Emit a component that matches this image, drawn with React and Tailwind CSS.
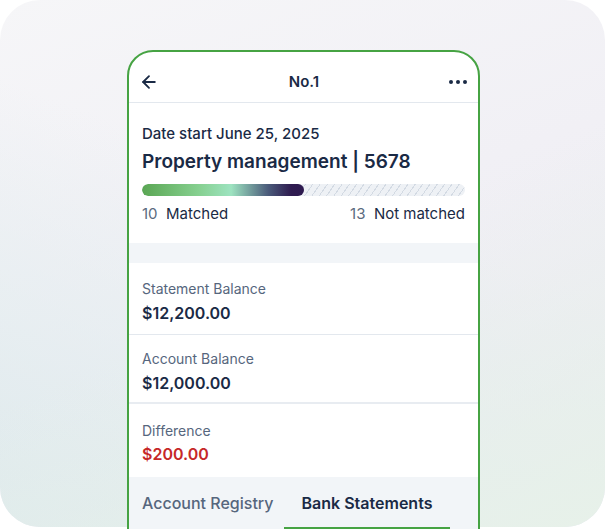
import { ArrowLeft } from 'lucide-react';

const ROWS = [
  { label: 'Statement Balance', value: '$12,200.00', cls: 'pt-[16px] pb-[10px] border-b border-[#e3e8ee]', gap: 'mt-[3px]' },
  { label: 'Account Balance', value: '$12,000.00', cls: 'pt-[14px] pb-[8px] border-b-2 border-[#e8ecf1]', gap: 'mt-[3px]' },
  { label: 'Difference', value: '$200.00', red: true, cls: 'pt-[17px] pb-[12px]', gap: 'mt-[2px]' },
];

export default function App() {
  return (
    <div
      className="relative w-[607px] h-[529px] overflow-hidden bg-white"
      style={{ fontFamily: 'Inter, "Noto Sans", sans-serif' }}
    >
      {/* backdrop card */}
      <div className="absolute left-0 top-0 w-[605px] h-[527px] rounded-[40px] bg-[linear-gradient(160deg,#f6f6f8_0%,#f1f0f5_45%,#ebe8f3_100%)]">
        <div className="absolute inset-0 rounded-[40px] bg-[linear-gradient(20deg,#deeaec_0%,rgba(226,237,239,0.6)_30%,rgba(255,255,255,0)_60%)]" />
        <div className="absolute inset-0 rounded-[40px] bg-[linear-gradient(-25deg,#e7f1e9_0%,rgba(231,241,233,0.5)_25%,rgba(255,255,255,0)_50%)]" />
      </div>

      <div className="relative ml-[127px] mt-[50px] w-[353px] h-[520px] rounded-t-[26px] border-2 border-[#46a343] bg-white overflow-hidden text-[#1a2a45]">
        {/* top bar */}
        <div className="h-[51px] flex items-center justify-between px-[10px] pt-[10px] border-b border-[#e3e8ee]">
          <ArrowLeft className="w-[20px] h-[20px] text-[#1a2a45]" strokeWidth={2.2} />
          <span className="text-[15px] font-semibold">No.1</span>
          <div className="flex gap-[3px] pr-[1px]">
            <span className="w-[4px] h-[4px] rounded-full bg-[#1a2a45]" />
            <span className="w-[4px] h-[4px] rounded-full bg-[#1a2a45]" />
            <span className="w-[4px] h-[4px] rounded-full bg-[#1a2a45]" />
          </div>
        </div>

        {/* summary */}
        <div className="px-[13px] pt-[21px] pb-[19px]">
          <div className="text-[15px] font-medium leading-[20px]">Date start June 25, 2025</div>
          <div className="text-[19px] font-semibold leading-[26px] mt-[5px]">Property management | 5678</div>
          <div className="mt-[9px] h-[12px] rounded-full overflow-hidden bg-[repeating-linear-gradient(-55deg,#eef1f5_0px,#eef1f5_5px,#d3dae3_5px,#d3dae3_6px)] flex">
            <div className="w-[50%] h-full rounded-full bg-[linear-gradient(90deg,#5aa653_0%,#86d090_35%,#9de3c0_55%,#4a5a7a_78%,#2f1c50_92%,#2e1a4f_100%)]" />
          </div>
          <div className="mt-[8px] flex justify-between text-[15px] leading-[20px]">
            <span><span className="text-[#5b6b80]">10</span>&nbsp; Matched</span>
            <span><span className="text-[#5b6b80]">13</span>&nbsp; Not matched</span>
          </div>
        </div>

        <div className="h-[20px] bg-[#f2f5f8]" />

        {ROWS.map((r) => (
          <div key={r.label} className={`px-[13px] ${r.cls}`}>
            <div className="text-[14px] leading-[20px] text-[#56667d]">{r.label}</div>
            <div className={`${r.gap} text-[16px] font-semibold leading-[22px] ${r.red ? 'text-[#c62828]' : ''}`}>{r.value}</div>
          </div>
        ))}

        {/* tabs */}
        <div className="relative bg-[#f2f5f8] flex h-[60px]">
          <div className="w-[155px] pl-[13px] pt-[16px] text-[16px] leading-[20px] font-medium text-[#56667d]">Account Registry</div>
          <div className="relative w-[166px] pt-[16px] text-center text-[16px] leading-[20px] font-semibold">
            Bank Statements
            <span className="absolute left-0 right-0 top-[50px] h-[3px] bg-[#46a343]" />
          </div>
        </div>
      </div>
    </div>
  );
}
